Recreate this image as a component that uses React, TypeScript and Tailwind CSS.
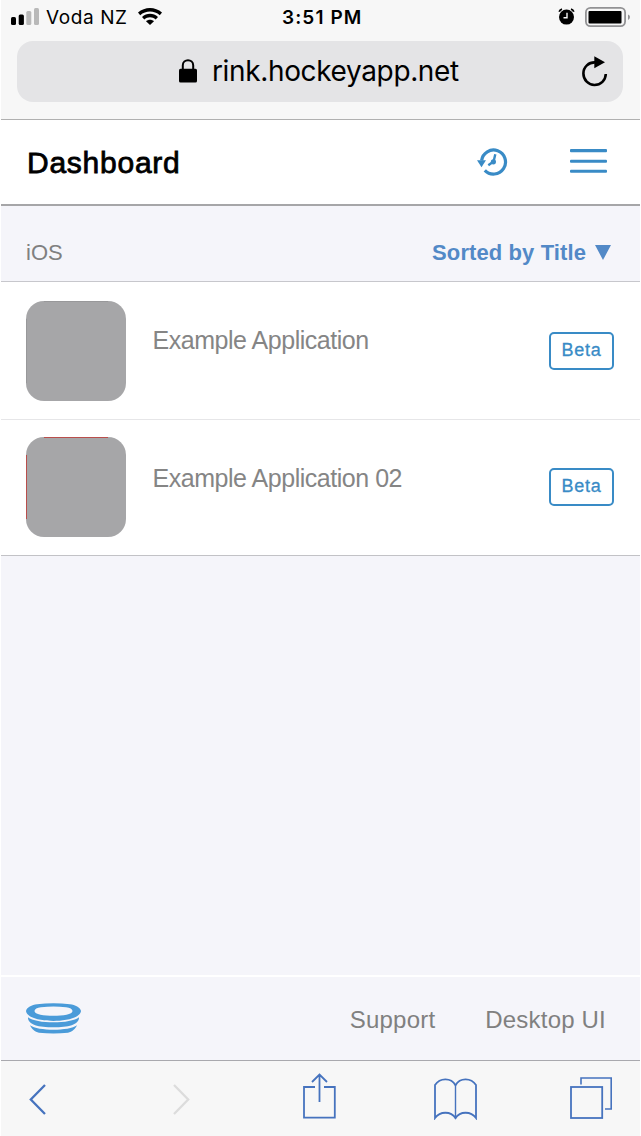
import React from 'react';

interface AppEntry {
  name: string;
  edgeColor: string;
  rowClass: string;
  nameClass: string;
}

const apps: AppEntry[] = [
  { name: 'Example Application', edgeColor: '#98989a', rowClass: 'h-[138px]', nameClass: 'mb-[19px]' },
  { name: 'Example Application 02', edgeColor: '#b94e4c', rowClass: 'h-[135px] pb-[2px]', nameClass: 'mb-[15px]' },
];

const StatusBar: React.FC = () => (
  <div className="relative flex h-[34px] items-center justify-between pl-[10px] pr-[10px] font-[Inter,sans-serif] text-[19px] leading-[34px]">
    <div className="flex items-center">
      <svg className="w-[28px] h-[17px] mr-[7px] mb-px" viewBox="0 0 28 17">
        <rect x="0" y="9" width="5" height="8" rx="1.5" fill="#000" />
        <rect x="7.7" y="6.5" width="5.2" height="10.5" rx="1.5" fill="#000" />
        <rect x="15.3" y="3" width="5" height="14" rx="1.5" fill="#b9b9b9" />
        <rect x="23" y="0" width="5" height="17" rx="1.5" fill="#b9b9b9" />
      </svg>
      <span className="mt-px tracking-[0.6px]">Voda NZ</span>
      <svg className="w-[24px] h-[17px] ml-[10px] mb-[2px]" viewBox="0 0 24 17">
        <path d="M0 4.6C6.7-1.5 17.3-1.5 24 4.6L21.8 7.2C16.2 2.3 7.8 2.3 2.2 7.2z" />
        <path d="M4 9C8.6 4.8 15.4 4.8 20 9L17.7 11.5C14.4 8.6 9.6 8.6 6.3 11.5z" />
        <path d="M8 13.2C10.3 11.2 13.7 11.2 16 13.2L12 17z" />
      </svg>
    </div>
    <span className="absolute left-[281px] top-[0.5px] font-semibold tracking-[1.1px] whitespace-nowrap">3:51 PM</span>
    <div className="flex items-center gap-[10px]">
      <svg className="w-[17px] h-[17px] mb-px" viewBox="0 0 17 17">
        <circle cx="8.5" cy="9.1" r="7.5" />
        <path d="M1.2 3.8Q1.8 1.8 4 1.2M15.8 3.8Q15.2 1.8 13 1.2" fill="none" stroke="#000" strokeWidth="1.8" />
        <path d="M9 4.8V9.8H5.5" fill="none" stroke="#f7f7f7" strokeWidth="1.4" />
      </svg>
      <svg className="w-[45px] h-[20px]" viewBox="0 0 45 20">
        <rect x=".9" y=".9" width="39.2" height="18.2" rx="4.5" fill="none" stroke="#929294" strokeWidth="1.8" />
        <rect x="3.5" y="4" width="33" height="12.5" rx="1" />
        <path d="M43 7.5Q45 8 45 10T43 13z" fill="#929294" />
      </svg>
    </div>
  </div>
);

const AddressBar: React.FC = () => (
  <div className="relative ml-4 mr-[17px] mt-[6.5px] flex h-[61px] items-center rounded-[16px] bg-[#e4e4e6]">
    <svg className="w-[18px] h-[24px] ml-[162px] mb-px" viewBox="0 0 18 24">
      <rect x="0" y="9.7" width="18" height="13.8" rx="1.5" />
      <path d="M3.8 10V6.2C3.8-.5 14.2-.5 14.2 6.2V10" fill="none" stroke="#000" strokeWidth="2" />
    </svg>
    <span className="mt-px ml-[15px] font-[Inter,sans-serif] text-[28px] leading-[61px] tracking-[-0.36px]">rink.hockeyapp.net</span>
    <svg className="absolute right-[15px] top-[15px] w-[27px] h-[31px]" viewBox="0 0 27 31">
      <path d="M14 6.4C7.8 6.2 2.4 10.8 2.4 17.5C2.4 24 7.5 29 13.4 29C19.8 29 24.6 24.2 24.8 18" fill="none" stroke="#000" strokeWidth="2.6" />
      <path d="M13.3.3L24 6.2L13.3 12.2z" />
    </svg>
  </div>
);

const Header: React.FC = () => (
  <div className="flex h-[86px] items-center border-b-2 border-[#a6a6a8] bg-white pl-[26px] pr-[33px]">
    <h1 className="mt-px flex-1 text-[30px] leading-[84px] tracking-[0.75px] [-webkit-text-stroke:0.8px_black]">Dashboard</h1>
    <svg className="w-[31px] h-[28px] mr-[62px] mb-px" viewBox="0 0 31 28">
      <path d="M4.6 12.5A12 12 0 1 1 7.8 22.3" fill="none" stroke="#398bc6" strokeWidth="3.2" />
      <path d="M0 12.3H9L4.5 19.3z" fill="#398bc6" />
      <path d="M18.3 6.2L16.6 13.5L11.3 17.2" fill="none" stroke="#398bc6" strokeWidth="2.4" />
      <circle cx="16.4" cy="13.8" r="2.6" fill="#398bc6" />
    </svg>
    <svg className="w-[37px] h-[24px] mb-[2px]" viewBox="0 0 37 24" fill="#398bc6">
      <rect width="37" height="3.3" y="0" rx="1" />
      <rect width="37" height="3" y="10.7" rx="1" />
      <rect width="37" height="3" y="20.8" rx="1" />
    </svg>
  </div>
);

const AppRow: React.FC<{ app: AppEntry }> = ({ app }) => (
  <div className={`flex items-center pl-[25px] pr-[26px] ${app.rowClass}`}>
    <svg className="h-[100px] w-[100px]" viewBox="0 0 100 100">
      <rect width="100" height="100" rx="18" fill="#a6a6a8" />
      <path d="M18 .5H82M.5 18V82" stroke={app.edgeColor} />
    </svg>
    <span className={`ml-[26.5px] flex-1 text-[25px] tracking-[-0.47px] text-[#858585] ${app.nameClass}`}>{app.name}</span>
    <span className="flex h-[38px] w-[65px] items-center justify-center rounded-[5px] border-2 border-[#398bc6] text-[18px] tracking-[0.8px] text-[#398bc6] [-webkit-text-stroke:0.3px_#398bc6]">
      Beta
    </span>
  </div>
);

const Footer: React.FC = () => (
  <div className="flex h-[85px] items-center border-t-2 border-white pl-[25px] pr-[34px] text-[24px] tracking-[0.2px] text-[#808080]">
    <svg className="w-[55px] h-[31px] mb-px" viewBox="0 0 55 31" fill="#4a9bd9">
      <path fillRule="evenodd" d="M11 1.2Q27.5-.8 44 1.2C49 1.7 54.5 4.5 55 8C54 15.5 38 17.9 27.5 17.9S1 15.5 0 8C.5 4.5 6 1.7 11 1.2zM15 4.2C11 4.7 8.5 6 8.5 8C8.5 11.5 18 12.8 27.5 12.8S46.5 11.5 46.5 8C46.5 6 44 4.7 40 4.2Q27.5 2.8 15 4.2z" />
      <path d="M2 14.2C10 21 45 21 53 14.2C53.2 22 42 24.2 27.5 24.2S1.8 22 2 14.2z" />
      <path d="M4 22.3C12 28.3 43 28.3 51 22.3C49.5 26 46 29 42 29.8Q27.5 31.2 13 29.8C9 29 5.5 26 4 22.3z" />
    </svg>
    <span className="ml-auto mt-[3px]">Support</span>
    <span className="ml-[50px] mt-[3px]">Desktop UI</span>
  </div>
);

const Toolbar: React.FC = () => (
  <div className="flex h-[76px] items-center border-t border-[#a9a9ae] bg-[#f7f7f7] pl-[28px]">
    <svg className="w-[17px] h-[31px] mt-px" viewBox="0 0 17 31" fill="none" stroke="#4673be" strokeWidth="2.3">
      <path d="M16 1L1.8 15.5L16 30" />
    </svg>
    <svg className="w-[17px] h-[31px] mt-px ml-[127px]" viewBox="0 0 17 31" fill="none" stroke="#dcdcdc" strokeWidth="2.3">
      <path d="M1 1L15.2 15.5L1 30" />
    </svg>
    <svg className="w-[33px] h-[46px] mb-[5px] ml-[113px]" viewBox="0 0 33 46" fill="none" stroke="#4673be" strokeWidth="1.8">
      <path d="M12 14H1V44.7H31.8V14H21" />
      <path d="M16.5 29V1.8M9 9L16.5 1.5L24 9" />
    </svg>
    <svg className="w-[43px] h-[42px] ml-[98px]" viewBox="0 0 43 42" fill="none" stroke="#4673be" strokeWidth="1.8">
      <path d="M1 7C6-.5 17-.5 21.5 7.2C26-.5 37-.5 42 7V40C37 33 26 33 21.5 40C17 33 6 33 1 40z" />
      <path d="M21.5 7V41" strokeWidth="1.4" />
    </svg>
    <svg className="w-[42px] h-[42px] ml-[93px] mb-px" viewBox="0 0 42 42" fill="none" stroke="#4673be" strokeWidth="1.8">
      <rect x="1" y="10" width="31.2" height="31" />
      <path d="M11 7.5V1H41.2V32H35" strokeWidth="1.6" />
    </svg>
  </div>
);

export default function App() {
  return (
    <div className="flex h-[1136px] w-[641px] flex-col bg-white px-px font-['Liberation_Sans',Arial,sans-serif] text-black">
      <div className="h-[120px] shrink-0 border-b border-[#b0b0b0] bg-[#f7f7f7]">
        <StatusBar />
        <AddressBar />
      </div>
      <Header />
      <div className="flex flex-1 flex-col bg-[#f5f5fa]">
        <div className="flex h-[76px] items-center justify-between border-b border-[#c7c7cc] pl-[25px] pr-[29px] pt-[18px] text-[22px]">
          <span className="text-[#808080]">iOS</span>
          <div className="flex items-center font-bold text-[#5289c7]">
            <span className="tracking-[0.1px]">Sorted by Title</span>
            <svg className="ml-[9px] w-[16px] h-[15px]" viewBox="0 0 16 15" fill="#5289c7">
              <path d="M0 0H16L8 15z" />
            </svg>
          </div>
        </div>
        <div className="flex h-[274px] flex-col divide-y divide-[#e6e6e8] border-b border-[#c2c2c6] bg-white">
          {apps.map((app) => (
            <AppRow key={app.name} app={app} />
          ))}
        </div>
        <div className="flex-1"></div>
        <Footer />
        <Toolbar />
      </div>
    </div>
  );
}
